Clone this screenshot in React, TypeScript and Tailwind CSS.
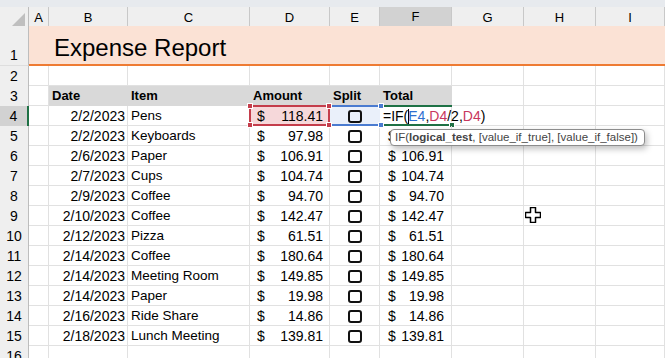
import React from "react";

interface Expense {
  date: string;
  item: string;
  amount: string;
}

const expenses: Expense[] = [
  { date: "2/2/2023", item: "Pens", amount: "118.41" },
  { date: "2/2/2023", item: "Keyboards", amount: "97.98" },
  { date: "2/6/2023", item: "Paper", amount: "106.91" },
  { date: "2/7/2023", item: "Cups", amount: "104.74" },
  { date: "2/9/2023", item: "Coffee", amount: "94.70" },
  { date: "2/10/2023", item: "Coffee", amount: "142.47" },
  { date: "2/12/2023", item: "Pizza", amount: "61.51" },
  { date: "2/14/2023", item: "Coffee", amount: "180.64" },
  { date: "2/14/2023", item: "Meeting Room", amount: "149.85" },
  { date: "2/14/2023", item: "Paper", amount: "19.98" },
  { date: "2/16/2023", item: "Ride Share", amount: "14.86" },
  { date: "2/18/2023", item: "Lunch Meeting", amount: "139.81" },
];

const letters = ["A", "B", "C", "D", "E", "F", "G", "H", "I"];
const cols = "grid grid-cols-[29px_20px_79px_122px_80px_50px_72px_72px_72px_69px]";
const cell = "h-[20px] border-r border-b border-[#e1e1e1] leading-[20px] whitespace-nowrap";

const RowHead = ({ n, active }: { n: number; active?: boolean }) => (
  <div
    className={
      "h-full flex items-end justify-center text-[14px] leading-[20px] border-b border-b-[#dedede] " +
      (active
        ? "bg-[#d2d2d2] border-r-2 border-r-[#1e7145]"
        : "bg-[#efefef] border-r border-r-[#bdbdbd]")
    }
  >
    {n}
  </div>
);

const Money = ({ value, f }: { value: string; f?: boolean }) => (
  <div className={"flex justify-between " + (f ? "pl-[8px] pr-[7px]" : "pl-[7px] pr-[6px]")}>
    <span>$</span>
    <span>{value}</span>
  </div>
);

const Checkbox = () => (
  <div className="flex justify-center pt-[4px]">
    <div className="w-[14px] h-[13px] border-2 border-[#111] rounded-[3px]" />
  </div>
);

const Handle = ({ pos, color }: { pos: string; color: string }) => (
  <div className={"absolute w-[6px] h-[6px] border border-white " + pos + " " + color} />
);

const App = () => {
  return (
    <div className="relative w-[665px] h-[358px] overflow-hidden bg-white text-black font-['Liberation_Sans',Arial,sans-serif]">
      {/* top strip */}
      <div className="h-[7px] bg-[#e7eaee]" />

      {/* column letters */}
      <div className={cols + " h-[19px]"}>
        <div className="flex items-end justify-end pr-[3px] pb-[2px] bg-[#efefef] border-r border-b border-[#bdbdbd]">
          <svg width="13" height="13" viewBox="0 0 13 13">
            <polygon points="13,0 13,13 0,13" fill="#bfbfbf" />
          </svg>
        </div>
        {letters.map((l) => (
          <div
            key={l}
            className={
              "flex items-center justify-center text-[13px] " +
              (l === "F"
                ? "bg-[#d2d2d2] border-r border-r-[#c8c8c8] border-b-2 border-b-[#1e7145]"
                : "bg-[#efefef] border-r border-r-[#c8c8c8] border-b border-b-[#bdbdbd]")
            }
          >
            {l}
          </div>
        ))}
      </div>

      {/* row 1: title */}
      <div className={cols + " h-[40px]"}>
        <RowHead n={1} />
        <div className="col-span-9 bg-[#fbe2d5] border-b-2 border-[#ee7b33] pl-[25px] pt-[8px] text-[24px] leading-[28px] whitespace-nowrap">
          Expense Report
        </div>
      </div>

      {/* row 2 */}
      <div className={cols + " h-[20px]"}>
        <RowHead n={2} />
        {letters.map((l) => (
          <div key={l} className={cell} />
        ))}
      </div>

      {/* row 3: headers */}
      <div className={cols + " h-[20px]"}>
        <RowHead n={3} />
        <div className={cell} />
        {["Date", "Item", "Amount", "Split", "Total"].map((h) => (
          <div key={h} className="h-[20px] bg-[#d9d9d9] pl-[3px] text-[13px] font-bold leading-[20px]">
            {h}
          </div>
        ))}
        <div className={cell} />
        <div className={cell} />
        <div className={cell} />
      </div>

      {/* data rows */}
      {expenses.map((e, i) => {
        const first = i === 0;
        return (
          <div key={i} className={cols + " h-[20px]"}>
            <RowHead n={i + 4} active={first} />
            <div className={cell} />
            <div className={cell + " text-right pr-[2px] text-[14px]"}>{e.date}</div>
            <div className={cell + " pl-[3px] text-[13.5px]"}>{e.item}</div>
            <div className={cell + " relative text-[14px]"}>
              {first && (
                <div className="absolute inset-[-1px] z-10 bg-[#f6d8da] border-2 border-[#c43d4b]">
                  <Handle pos="-left-[4px] -top-[4px]" color="bg-[#c43d4b]" />
                  <Handle pos="-right-[4px] -top-[4px]" color="bg-[#c43d4b]" />
                  <Handle pos="-left-[4px] -bottom-[4px]" color="bg-[#c43d4b]" />
                  <Handle pos="-right-[4px] -bottom-[4px]" color="bg-[#c43d4b]" />
                </div>
              )}
              <div className="relative z-20">
                <Money value={e.amount} />
              </div>
            </div>
            <div className={cell + " relative"}>
              {first && (
                <div className="absolute inset-[-1px] bg-[#eaf0fa] border-y-2 border-[#4a7bd0]">
                  <Handle pos="-right-[4px] -top-[4px] z-10" color="bg-[#4a7bd0]" />
                  <Handle pos="-right-[4px] -bottom-[4px] z-10" color="bg-[#4a7bd0]" />
                </div>
              )}
              <div className="relative">
                <Checkbox />
              </div>
            </div>
            <div className={cell + " relative text-[14px]"}>
              {first ? (
                <>
                  <div className="absolute left-0 right-[-1px] top-[-1px] bottom-[-1px] border-y-2 border-[#1e7145]">
                    <div className="absolute -right-[3px] -bottom-[4px] w-[6px] h-[6px] bg-[#1e7145] border border-white" />
                  </div>
                  <div className="relative z-20 pl-[3px]">
                    =IF(
                    <span className="inline-block w-px h-[15px] -mr-px bg-black align-[-3px]" />
                    <span className="text-[#2f6fd0]">E4</span>,<span className="text-[#c8375e]">D4</span>/2,
                    <span className="text-[#c8375e]">D4</span>)
                  </div>
                </>
              ) : (
                <Money value={e.amount} f />
              )}
            </div>
            <div className={cell} />
            <div className={cell} />
            <div className={cell} />
          </div>
        );
      })}

      {/* row 16 */}
      <div className={cols + " h-[20px]"}>
        <RowHead n={16} />
        {letters.map((l) => (
          <div key={l} className={cell} />
        ))}
      </div>

      {/* function tooltip */}
      <div className="absolute left-[390px] top-[129px] z-30 w-[255px] h-[17px] flex items-center pl-[4px] bg-white border border-[#8c8c8c] rounded-[4px] shadow-[2px_3px_6px_rgba(0,0,0,0.25)] text-[11.5px] text-[#444] whitespace-nowrap">
        IF(<span className="font-bold">logical_test</span>, [value_if_true], [value_if_false])
      </div>

      {/* cell cursor */}
      <svg className="absolute left-[525px] top-[207px]" width="16" height="16" viewBox="0 0 16 16">
        <path
          d="M5.5 0.5 H10.5 V5.5 H15.5 V10.5 H10.5 V15.5 H5.5 V10.5 H0.5 V5.5 H5.5 Z"
          fill="#fff"
          stroke="#000"
          strokeWidth="1.5"
          strokeLinejoin="round"
        />
      </svg>
    </div>
  );
};

export default App;
